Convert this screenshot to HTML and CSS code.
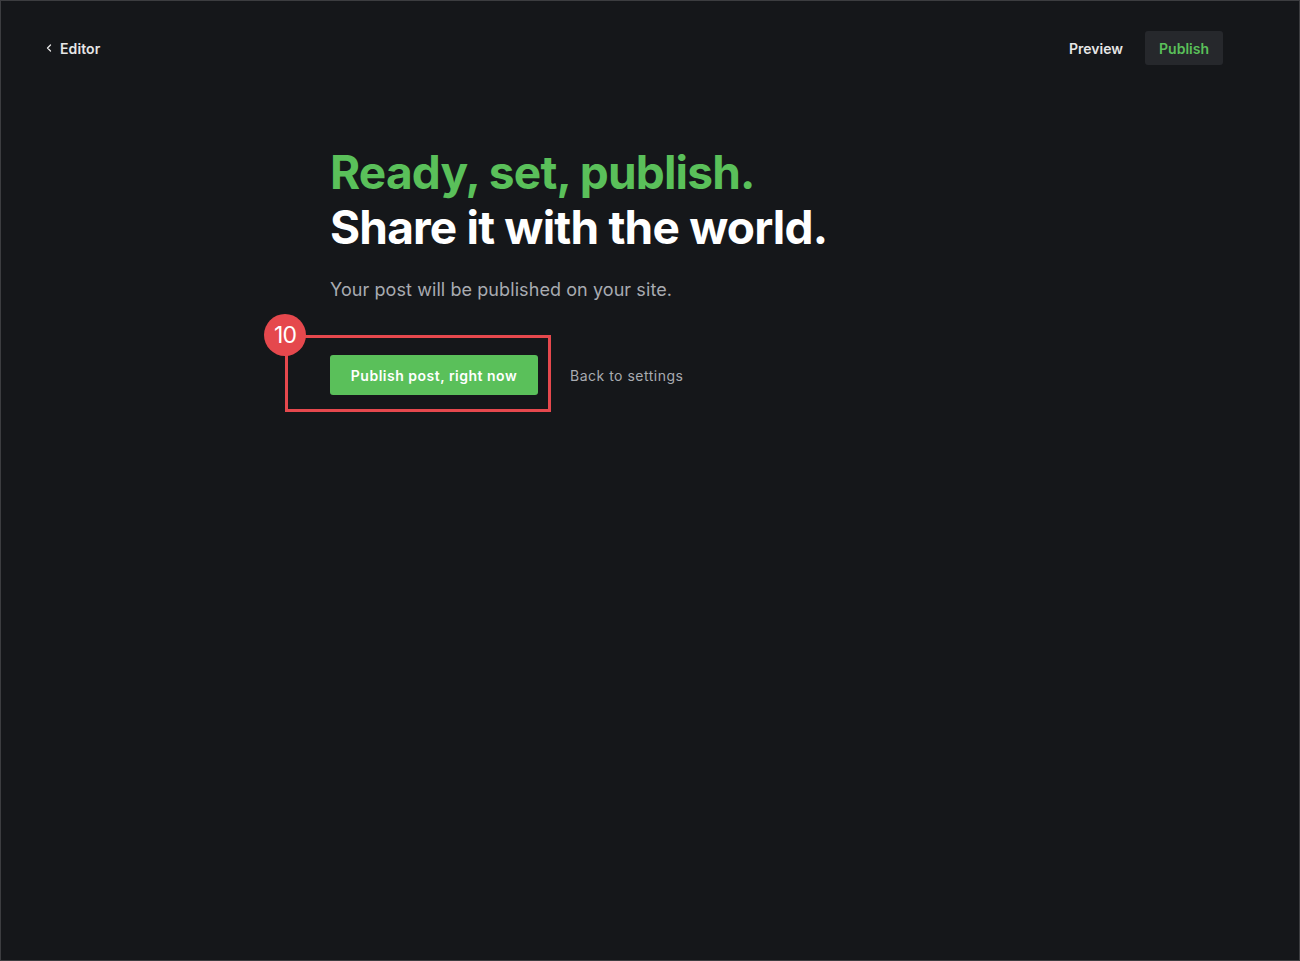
FILE: index.html
```html
<!DOCTYPE html>
<html lang="en">
<head>
  <meta charset="UTF-8" />
  <meta name="viewport" content="width=device-width, initial-scale=1.0" />
  <title>Publish</title>
  <link rel="stylesheet" href="styles.css">
</head>
<body>
  <div class="frame">
    <header class="topbar">
      <a class="back" href="#">
        <svg width="8" height="8" viewBox="0 0 8 8"><path d="M5.5 1 L2.5 4 L5.5 7" fill="none" stroke="#e6e6e6" stroke-width="1.3" stroke-linecap="round" stroke-linejoin="round"/></svg>
        Editor
      </a>
      <div class="actions">
        <a class="preview" href="#">Preview</a>
        <button class="publish-tab">Publish</button>
      </div>
    </header>

    <main class="content">
      <h1 class="title">
        <span class="green">Ready, set, publish.</span>
        <span>Share it with the world.</span>
      </h1>
      <p class="lead">Your post will be published on your site.</p>
      <div class="buttons">
        <div class="highlight">
          <span class="step">10</span>
          <button class="publish-now">Publish post, right now</button>
        </div>
        <a class="back-settings" href="#">Back to settings</a>
      </div>
    </main>
  </div>
</body>
</html>
```

FILE: styles.css
```css
html, body {
  margin: 0;
  height: 100%;
}
body {
  font-family: Inter, "Noto Sans", Arial, sans-serif;
  background: #15171a;
  color: #fff;
}
.frame {
  box-sizing: border-box;
  height: 961px;
  border: 1px solid #3c3d40;
  background: #15171a;
}
.topbar {
  display: flex;
  justify-content: space-between;
  align-items: center;
  padding: 29px 76px 0 44px;
  height: 36px;
}
.back {
  display: flex;
  align-items: center;
  gap: 7px;
  color: #e6e6e6;
  text-decoration: none;
  font-size: 14px;
  font-weight: 600;
  letter-spacing: 0.1px;
}
.actions {
  display: flex;
  align-items: center;
  gap: 22px;
}
.preview {
  color: #e6e6e6;
  text-decoration: none;
  font-size: 14px;
  font-weight: 600;
}
.publish-tab {
  height: 34px;
  padding: 0 14px;
  background: #26282c;
  border: none;
  border-radius: 3px;
  color: #5ac05a;
  font-family: inherit;
  font-size: 14px;
  font-weight: 600;
}
.content {
  padding: 79px 0 0 329px;
}
.title {
  margin: 0;
  font-size: 46px;
  font-weight: 700;
  letter-spacing: -0.8px;
  line-height: 55px;
}
.title span {
  display: block;
}
.green {
  color: #5ac05a;
}
.lead {
  margin: 22px 0 0;
  font-size: 18px;
  color: #a8abb1;
  line-height: 26px;
  letter-spacing: 0.08px;
}
.buttons {
  display: flex;
  align-items: center;
  margin-top: 32px;
  margin-left: -45px;
}
.highlight {
  position: relative;
  padding: 17px 10px 14px 42px;
  border: 3px solid #e5484d;
}
.step {
  position: absolute;
  left: -24px;
  top: -24px;
  width: 42px;
  height: 42px;
  border-radius: 50%;
  background: #e5484d;
  color: #fff;
  font-size: 23px;
  line-height: 42px;
  text-align: center;
  letter-spacing: -1px;
}
.publish-now {
  display: block;
  height: 40px;
  width: 208px;
  background: #5ac05a;
  border: none;
  border-radius: 3px;
  color: #fff;
  font-family: inherit;
  font-size: 14px;
  font-weight: 600;
  letter-spacing: 0.5px;
}
.back-settings {
  margin: 4px 0 0 19px;
  color: #a8abb1;
  text-decoration: none;
  font-size: 14px;
  letter-spacing: 0.5px;
}
```
